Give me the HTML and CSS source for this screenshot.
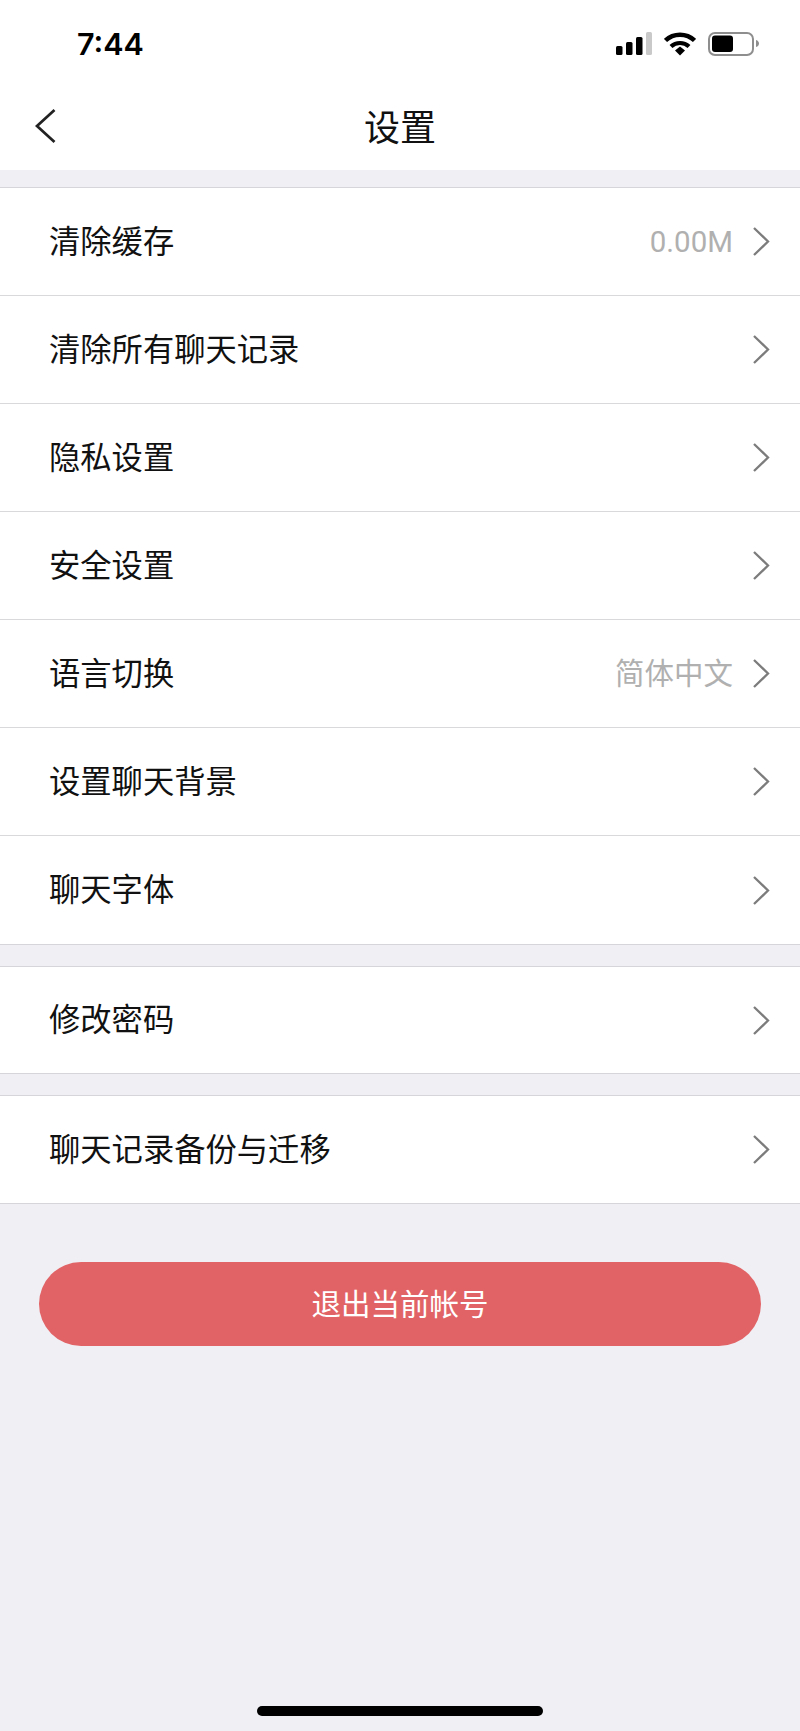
FILE: index.html
```html
<!DOCTYPE html>
<html lang="zh-CN">
<head>
<meta charset="utf-8">
<title>设置</title>
<link rel="stylesheet" href="styles.css">
</head>
<body>
<div class="screen">
  <header class="top">
    <div class="status">
      <span class="time">7:44</span>
      <div class="status-icons">
        <svg class="i-signal" width="36" height="24" viewBox="0 0 36 24"><rect x="0" y="14" width="6.500" height="9" rx="1.500" fill="#000"/><rect x="10" y="10" width="6.500" height="13" rx="1.500" fill="#000"/><rect x="20" y="5" width="6.500" height="18" rx="1.500" fill="#000"/><rect x="30" y="0" width="6" height="23" rx="1.500" fill="#c9c9c9"/></svg>
        <svg class="i-wifi" width="32" height="24" viewBox="0 0 32 24"><path d="M1.500 8.500C9.500 .8 22.500 .8 30.500 8.500" fill="none" stroke="#000" stroke-width="4.500"/><path d="M7 14.500C12 9.800 20 9.800 25 14.500" fill="none" stroke="#000" stroke-width="4.200"/><path d="M11 18.500L16 14.500L21 18.500L16 23.500Z" fill="#000"/></svg>
        <svg class="i-batt" width="52" height="24" viewBox="0 0 52 24"><rect x="1" y="1" width="44" height="22" rx="6" fill="#fff" stroke="#8e8e8e" stroke-width="2"/><rect x="4" y="3.500" width="21" height="16.500" rx="3" fill="#000"/><path d="M48 8C50 8.500 51 10 51 11.500C51 13 50 14.500 48 15Z" fill="#8e8e8e"/></svg>
      </div>
    </div>
    <nav class="nav">
      <svg class="back" width="24" height="36" viewBox="0 0 24 36"><path d="M21.500 2L4 18L21.500 34" fill="none" stroke="#222" stroke-width="2.700"/></svg>
      <h1 class="title">设置</h1>
    </nav>
  </header>

  <section class="group group-first">
    <div class="row"><span class="label">清除缓存</span><span class="value">0.00M</span><svg class="chev" width="18" height="31" viewBox="0 0 18 31"><path d="M2 2L16 15.500L2 29" fill="none" stroke="#7c7c7c" stroke-width="2.300"/></svg></div>
    <div class="row"><span class="label">清除所有聊天记录</span><svg class="chev" width="18" height="31" viewBox="0 0 18 31"><path d="M2 2L16 15.500L2 29" fill="none" stroke="#7c7c7c" stroke-width="2.300"/></svg></div>
    <div class="row"><span class="label">隐私设置</span><svg class="chev" width="18" height="31" viewBox="0 0 18 31"><path d="M2 2L16 15.500L2 29" fill="none" stroke="#7c7c7c" stroke-width="2.300"/></svg></div>
    <div class="row"><span class="label">安全设置</span><svg class="chev" width="18" height="31" viewBox="0 0 18 31"><path d="M2 2L16 15.500L2 29" fill="none" stroke="#7c7c7c" stroke-width="2.300"/></svg></div>
    <div class="row"><span class="label">语言切换</span><span class="value">简体中文</span><svg class="chev" width="18" height="31" viewBox="0 0 18 31"><path d="M2 2L16 15.500L2 29" fill="none" stroke="#7c7c7c" stroke-width="2.300"/></svg></div>
    <div class="row"><span class="label">设置聊天背景</span><svg class="chev" width="18" height="31" viewBox="0 0 18 31"><path d="M2 2L16 15.500L2 29" fill="none" stroke="#7c7c7c" stroke-width="2.300"/></svg></div>
    <div class="row"><span class="label">聊天字体</span><svg class="chev" width="18" height="31" viewBox="0 0 18 31"><path d="M2 2L16 15.500L2 29" fill="none" stroke="#7c7c7c" stroke-width="2.300"/></svg></div>
  </section>
  <section class="group group-password">
    <div class="row"><span class="label">修改密码</span><svg class="chev" width="18" height="31" viewBox="0 0 18 31"><path d="M2 2L16 15.500L2 29" fill="none" stroke="#7c7c7c" stroke-width="2.300"/></svg></div>
  </section>
  <section class="group group-backup">
    <div class="row"><span class="label">聊天记录备份与迁移</span><svg class="chev" width="18" height="31" viewBox="0 0 18 31"><path d="M2 2L16 15.500L2 29" fill="none" stroke="#7c7c7c" stroke-width="2.300"/></svg></div>
  </section>

  <button class="logout" type="button">退出当前帐号</button>
  <div class="home-wrap"><div class="home"></div></div>
</div>
</body>
</html>
```
FILE: styles.css
```css
* { box-sizing: border-box; }
html, body { margin: 0; padding: 0; }
body {
  background: #efeff4;
  font-family: "Noto Sans CJK SC", "Noto Sans", sans-serif;
}
.screen {
  width: 800px;
  height: 1731px;
  display: flex;
  flex-direction: column;
  background: #efeff4;
}
.top { background: #fff; height: 170px; }
.status {
  height: 88px;
  padding: 0 40px 0 77px;
  display: flex;
  align-items: center;
  justify-content: space-between;
}
.time {
  font-family: "Inter", "Liberation Sans", sans-serif;
  font-size: 30.5px;
  font-weight: 600;
  color: #000;
  line-height: 1;
}
.status-icons { display: flex; align-items: center; gap: 12px; }
.nav {
  height: 82px;
  display: flex;
  align-items: center;
  justify-content: center;
  position: relative;
}
.back { position: absolute; left: 33px; top: 20px; }
.title {
  margin: 0;
  padding-bottom: 8px;
  font-size: 36px;
  font-weight: 400;
  color: #111;
  line-height: 1;
}
.group {
  margin-top: 21px;
  background: #fff;
  border-top: 1px solid #d6d6da;
  border-bottom: 1px solid #d6d6da;
}
.group-first { margin-top: 17px; }
.row {
  height: 108px;
  display: flex;
  align-items: center;
  padding: 0 30px 0 49px;
  border-bottom: 1px solid #d9d9dc;
}
.group .row:last-child { border-bottom: 0; }
.group-password .row { height: 106px; }
.group-backup .row { height: 107px; }
.label {
  flex: 1;
  padding-bottom: 4px;
  font-size: 31.3px;
  color: #111;
  line-height: 1;
}
.value {
  padding-top: 2px;
  font-family: "Roboto", "Noto Sans CJK SC", sans-serif;
  font-weight: 400;
  font-size: 29.5px;
  color: #b0b0b0;
  line-height: 1;
  margin-right: 19px;
}
.chev { flex: none; }
.logout {
  margin: 58px 39px 0;
  padding: 0 0 4px;
  height: 84px;
  width: 722px;
  border: 0;
  border-radius: 42px;
  background: #e26365;
  color: #fff;
  font-family: inherit;
  font-size: 29.5px;
}
.home-wrap {
  margin-top: auto;
  padding-bottom: 15px;
  display: flex;
  justify-content: center;
}
.home { width: 286px; height: 10px; border-radius: 5px; background: #000; }
```
